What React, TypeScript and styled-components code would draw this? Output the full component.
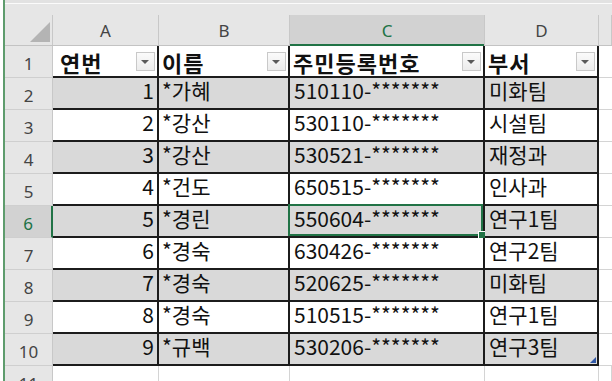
import styled, { createGlobalStyle } from 'styled-components'

type Person = {
	no: number
	name: string
	id: string
	dept: string
}

const people: Person[] = [
	{ no: 1, name: '*가혜', id: '510110-*******', dept: '미화팀' },
	{ no: 2, name: '*강산', id: '530110-*******', dept: '시설팀' },
	{ no: 3, name: '*강산', id: '530521-*******', dept: '재정과' },
	{ no: 4, name: '*건도', id: '650515-*******', dept: '인사과' },
	{ no: 5, name: '*경린', id: '550604-*******', dept: '연구1팀' },
	{ no: 6, name: '*경숙', id: '630426-*******', dept: '연구2팀' },
	{ no: 7, name: '*경숙', id: '520625-*******', dept: '미화팀' },
	{ no: 8, name: '*경숙', id: '510515-*******', dept: '연구1팀' },
	{ no: 9, name: '*규백', id: '530206-*******', dept: '연구3팀' },
]

const letters = ['A', 'B', 'C', 'D']
const selectedCol = 'C'
const selectedRow = 6

export default function App() {
	return (
		<>
			<GlobalStyle />
			<Frame>
				<TopStrip />
				<HeaderRow>
					<Corner>
						<CornerMark />
					</Corner>
					{letters.map((l) => (
						<ColHeader key={l} $selected={l === selectedCol}>
							{l}
						</ColHeader>
					))}
					<ColHeader $selected={false} />
				</HeaderRow>

				<Row>
					<RowHeader $selected={false}>1</RowHeader>
					<HeadCell $indent={7}>
						<HeadText>연번</HeadText>
						<FilterButton />
					</HeadCell>
					<HeadCell $indent={3}>
						<HeadText>이름</HeadText>
						<FilterButton />
					</HeadCell>
					<HeadCell $indent={3}>
						<HeadText>주민등록번호</HeadText>
						<FilterButton />
					</HeadCell>
					<HeadCell $indent={3}>
						<HeadText>부서</HeadText>
						<FilterButton />
					</HeadCell>
					<BlankCell />
				</Row>

				{people.map((p, i) => {
					const rowNo = i + 2
					const shaded = i % 2 === 0
					const isSel = rowNo === selectedRow
					const isLast = i === people.length - 1
					return (
						<Row key={p.no}>
							<RowHeader $selected={isSel}>{rowNo}</RowHeader>
							<Cell $shaded={shaded} $right>
								{p.no}
							</Cell>
							<Cell $shaded={shaded}>{p.name}</Cell>
							<Cell $shaded={shaded} $pad={4}>
								{p.id}
								{isSel && (
									<Selection>
										<FillHandle />
									</Selection>
								)}
							</Cell>
							<Cell $shaded={shaded} $pad={4}>
								{p.dept}
								{isLast && <ResizeHandle />}
							</Cell>
							<BlankCell />
						</Row>
					)
				})}

				<Row>
					<RowHeader $selected={false}>11</RowHeader>
					<EmptyCell />
					<EmptyCell />
					<EmptyCell />
					<EmptyCell />
					<EmptyCell />
				</Row>
			</Frame>
		</>
	)
}

const GlobalStyle = createGlobalStyle`
	html, body {
		margin: 0;
		padding: 0;
		background: #ffffff;
	}
	body {
		font-family: 'Noto Sans CJK KR', 'Noto Sans', sans-serif;
		overflow: hidden;
	}
`

const COLUMNS = '48px 106px 131px 195px 114px 1fr'

const Frame = styled.div`
	margin-left: 3px;
	border-left: 2px solid #5e9c6d;
	height: 381px;
	overflow: hidden;
	box-sizing: border-box;
	background: #ffffff;
`
const TopStrip = styled.div`
	height: 15px;
	background: linear-gradient(#e2e2e2 0 3px, #fbfbfb 3px 4px, #e6e6e6 4px);
`
const HeaderRow = styled.div`
	display: grid;
	grid-template-columns: ${COLUMNS};
	height: 30px;
	background: #e6e6e6;
	border-bottom: 1px solid #c3c3c3;
`
const Corner = styled.div`
	display: flex;
	justify-content: flex-end;
	align-items: flex-end;
	padding: 0 2px 3px 0;
	border-right: 1px solid #c8c8c8;
`
const CornerMark = styled.div`
	width: 20px;
	height: 20px;
	background: #b4b4b4;
	clip-path: polygon(100% 0, 100% 100%, 0 100%);
`
const ColHeader = styled.div<{ $selected: boolean }>`
	display: flex;
	align-items: center;
	justify-content: center;
	font-family: 'Noto Sans', sans-serif;
	font-size: 17px;
	color: ${(p) => (p.$selected ? '#217346' : '#444444')};
	background: ${(p) => (p.$selected ? '#d2d2d2' : '#e6e6e6')};
	border-right: 1px solid #c8c8c8;
	box-shadow: ${(p) => (p.$selected ? 'inset 0 -2px 0 #217346' : 'none')};
	margin-bottom: ${(p) => (p.$selected ? '-1px' : '0')};
`
const Row = styled.div`
	display: grid;
	grid-template-columns: ${COLUMNS};
	height: 32px;
`
const RowHeader = styled.div<{ $selected: boolean }>`
	display: flex;
	align-items: flex-end;
	justify-content: center;
	padding-bottom: 3px;
	box-sizing: border-box;
	font-family: 'Noto Sans', sans-serif;
	font-size: 17px;
	line-height: 20px;
	color: ${(p) => (p.$selected ? '#217346' : '#444444')};
	background: ${(p) => (p.$selected ? '#d2d2d2' : '#e6e6e6')};
	border-bottom: 1px solid #cfcfcf;
	border-right: ${(p) => (p.$selected ? '2px solid #217346' : '1px solid #c8c8c8')};
`
const Cell = styled.div<{ $shaded: boolean; $right?: boolean; $pad?: number }>`
	position: relative;
	display: flex;
	align-items: flex-end;
	justify-content: ${(p) => (p.$right ? 'flex-end' : 'flex-start')};
	padding: 0 ${(p) => (p.$right ? 3 : 0)}px 7px ${(p) => (p.$right ? 0 : p.$pad ?? 3)}px;
	box-sizing: border-box;
	font-size: 21px;
	line-height: 21px;
	color: #111111;
	white-space: nowrap;
	background: ${(p) => (p.$shaded ? '#d9d9d9' : '#ffffff')};
	border-right: 2px solid #1c1c1c;
	border-bottom: 2px solid #1c1c1c;
`
const HeadCell = styled.div<{ $indent: number }>`
	display: flex;
	align-items: center;
	justify-content: space-between;
	padding: 0 2px 0 ${(p) => p.$indent}px;
	box-sizing: border-box;
	background: #ffffff;
	border-right: 2px solid #1c1c1c;
	border-bottom: 2px solid #1c1c1c;
`
const HeadText = styled.span`
	font-size: 22px;
	line-height: 22px;
	font-weight: 700;
	letter-spacing: 1px;
	color: #111111;
	white-space: nowrap;
	margin-top: 2px;
`
const FilterButton = styled.div`
	position: relative;
	width: 19px;
	height: 19px;
	box-sizing: border-box;
	border: 1px solid #c9c9c9;
	background: linear-gradient(#fbfbfb, #ececec);
	flex-shrink: 0;

	&::after {
		content: '';
		position: absolute;
		left: 4px;
		top: 7px;
		border-left: 4.5px solid transparent;
		border-right: 4.5px solid transparent;
		border-top: 4.5px solid #5a5a5a;
	}
`
const BlankCell = styled.div`
	background: #ffffff;
	border-bottom: 1px solid #d4d4d4;
`
const EmptyCell = styled.div`
	background: #ffffff;
	border-right: 1px solid #d4d4d4;
	border-bottom: 1px solid #d4d4d4;
`
const Selection = styled.div`
	position: absolute;
	left: -2px;
	top: -2px;
	right: 0;
	bottom: 0;
	border: 2px solid #217346;
	pointer-events: none;
`
const FillHandle = styled.div`
	position: absolute;
	right: -5px;
	bottom: -5px;
	width: 6px;
	height: 6px;
	background: #217346;
	border: 1px solid #ffffff;
`
const ResizeHandle = styled.div`
	position: absolute;
	right: 1px;
	bottom: 1px;
	width: 0;
	height: 0;
	border-left: 6px solid transparent;
	border-bottom: 6px solid #2f57a6;
`
